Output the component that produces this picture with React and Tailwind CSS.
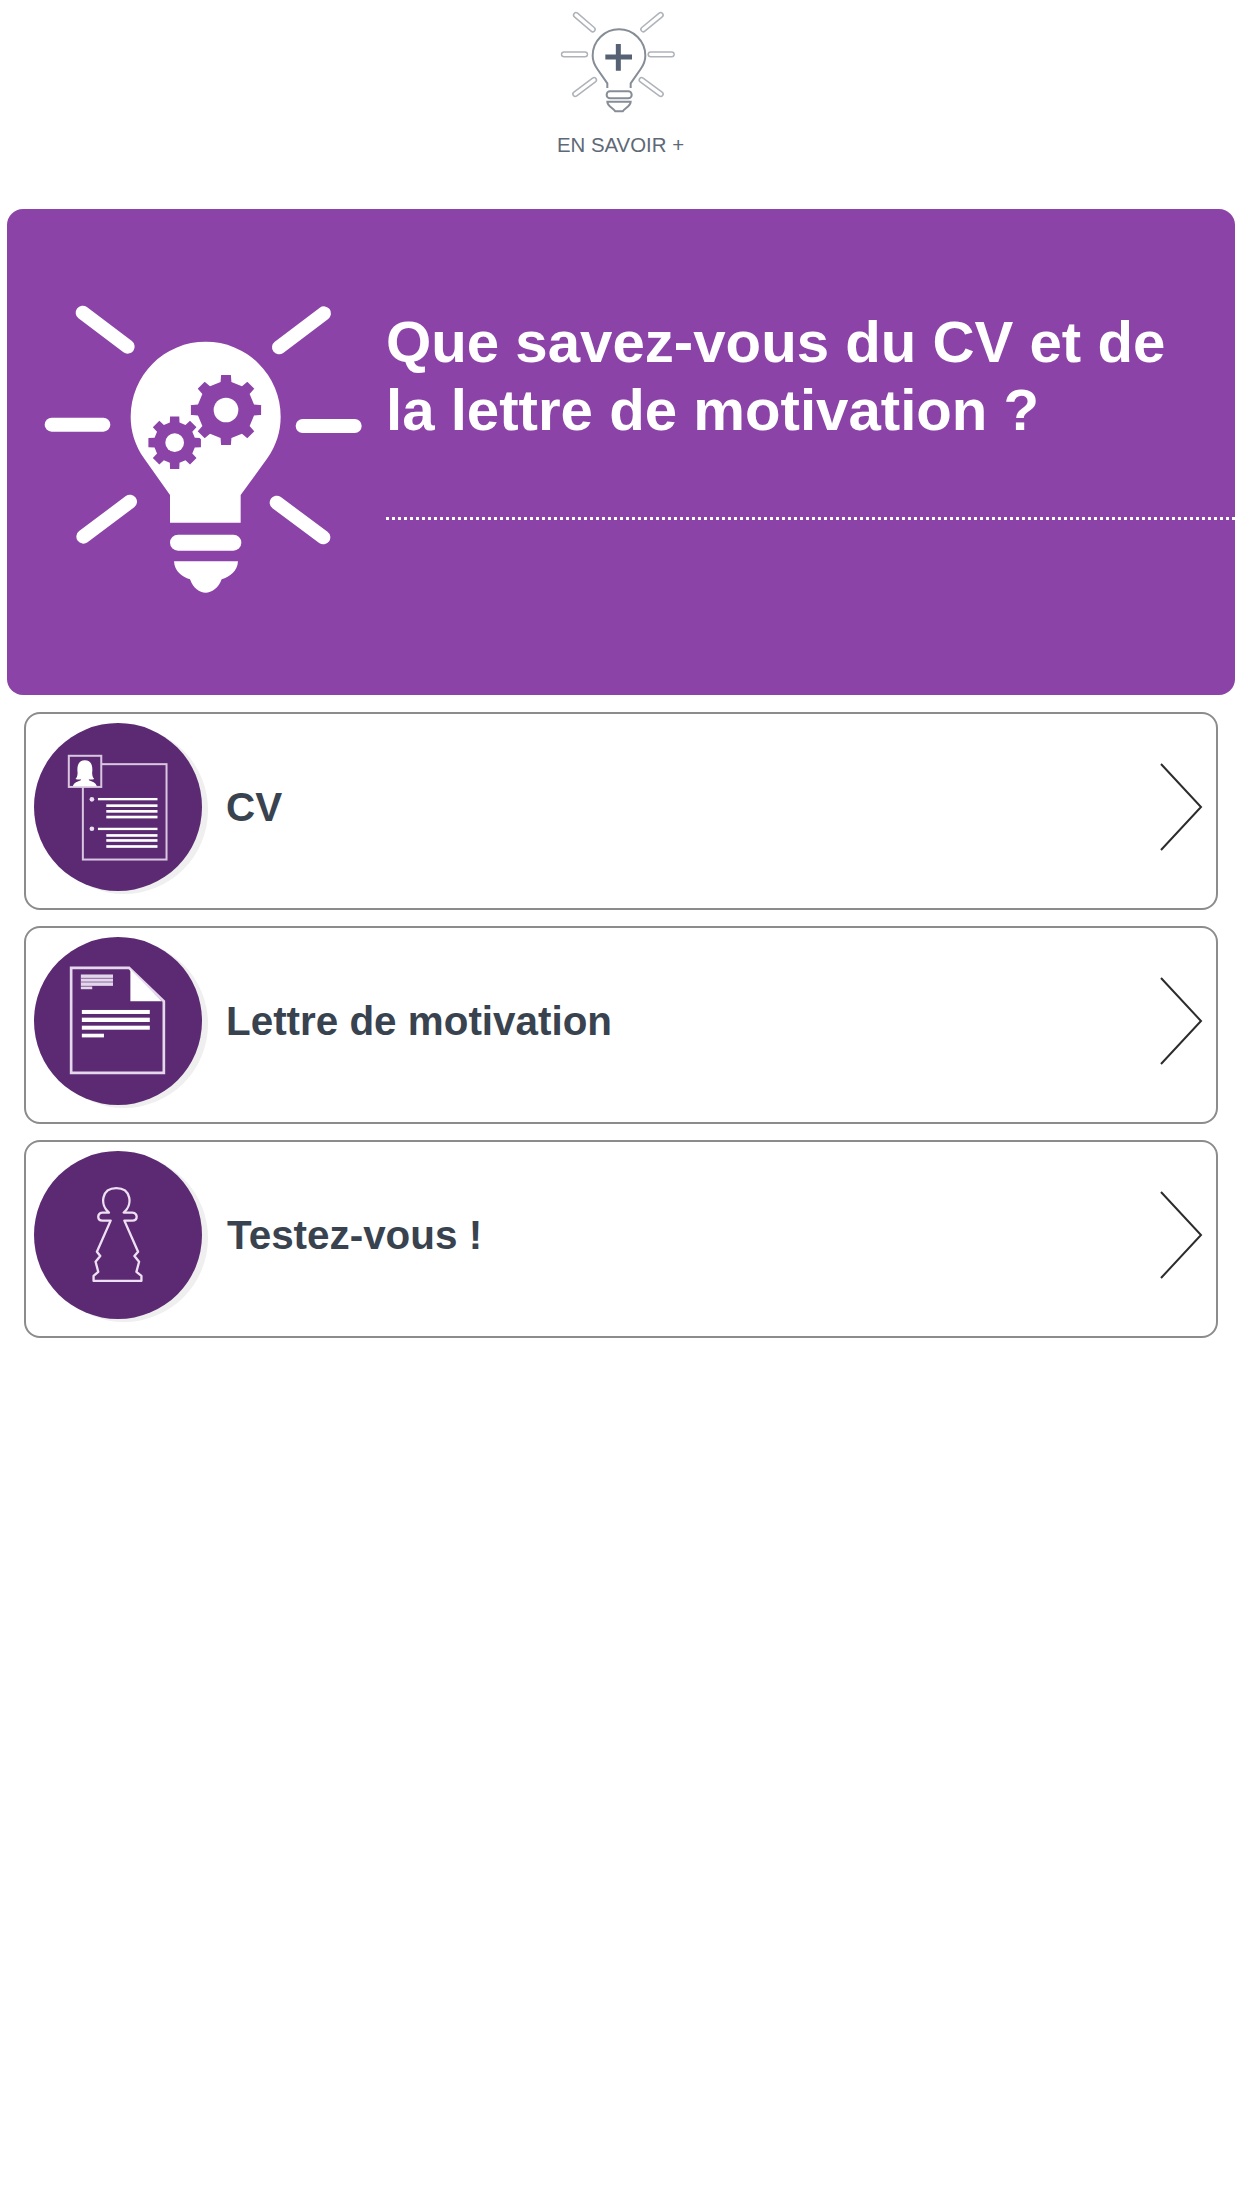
function gearPath(cx, cy, rOut, rIn, teeth) {
  const pts = [];
  const step = (Math.PI * 2) / teeth;
  for (let i = 0; i < teeth; i++) {
    const a = i * step - Math.PI / 2;
    const w = step * 0.22;
    const w2 = step * 0.3;
    [[a - w2, rIn], [a - w, rOut], [a + w, rOut], [a + w2, rIn]].forEach(([t, r]) => {
      pts.push(`${(cx + r * Math.cos(t)).toFixed(1)} ${(cy + r * Math.sin(t)).toFixed(1)}`);
    });
  }
  return "M" + pts.join("L") + "Z";
}

function TopIcon() {
  const rays = [
    [228, 45, 278, 88],
    [482, 45, 430, 88],
    [192, 163, 255, 163],
    [452, 163, 515, 163],
    [282, 240, 226, 282],
    [425, 240, 482, 282],
  ];
  return (
    <svg width="240" height="125" viewBox="0 0 720 375" fill="none" className="-ml-[2px] block">
      {rays.map((r, i) => (
        <g key={i}>
          <line x1={r[0]} y1={r[1]} x2={r[2]} y2={r[3]} stroke="#aeb3ba" strokeWidth="19" strokeLinecap="round" />
          <line x1={r[0]} y1={r[1]} x2={r[2]} y2={r[3]} stroke="#ffffff" strokeWidth="10" strokeLinecap="round" />
        </g>
      ))}
      <path
        d="M322 264 V250 L292 207 C283 194 278 182 278 167 A79 79 0 0 1 436 167 C436 182 431 194 422 207 L392 250 V264"
        stroke="#868d96"
        strokeWidth="6"
      />
      <path d="M355 132 V212 M316 171 H396" stroke="#566273" strokeWidth="15" />
      <rect x="320" y="274" width="75" height="21" rx="10" stroke="#868d96" strokeWidth="6" />
      <path d="M322 305 H392 C392 318 375 324 368 334 H346 C339 324 322 318 322 305 Z" stroke="#868d96" strokeWidth="6" />
    </svg>
  );
}

function BannerIcon() {
  const rays = [
    [248, 338, 383, 440],
    [972, 340, 837, 442],
    [155, 674, 310, 674],
    [908, 678, 1064, 678],
    [390, 905, 250, 1010],
    [830, 908, 970, 1012],
  ];
  return (
    <svg width="379" height="486" viewBox="21 27 1137 1458" className="block shrink-0" fill="none">
      {rays.map((r, i) => (
        <line key={i} x1={r[0]} y1={r[1]} x2={r[2]} y2={r[3]} stroke="#ffffff" strokeWidth="42" strokeLinecap="round" />
      ))}
      <path
        d="M510 968 V885 L432 775 C405 735 392 695 392 650 A225 225 0 0 1 842 650 C842 695 829 735 802 775 L722 885 V968 Z"
        fill="#ffffff"
      />
      <rect x="510" y="1004" width="214" height="48" rx="24" fill="#ffffff" />
      <path
        d="M522 1084 H714 C712 1115 690 1130 665 1138 C655 1165 635 1178 617 1178 C598 1178 580 1165 570 1138 C545 1130 524 1115 522 1084 Z"
        fill="#ffffff"
      />
      <path d={gearPath(524, 728, 80, 62, 8)} fill="#8c43a8" />
      <circle cx="524" cy="728" r="28" fill="#ffffff" />
      <path d={gearPath(678, 630, 112, 90, 8)} fill="#8c43a8" stroke="#ffffff" strokeWidth="10" />
      <circle cx="678" cy="630" r="37" fill="#ffffff" />
    </svg>
  );
}

function CvIcon() {
  const lines = [316, 333, 350, 405, 420, 438];
  return (
    <svg width="168" height="168" viewBox="74 69 502 502" fill="none" className="block">
      <rect x="220" y="192" width="250" height="285" stroke="#d9c6e0" strokeWidth="6" />
      <rect x="178" y="167" width="97" height="93" fill="#5b2a72" stroke="#d9c6e0" strokeWidth="6" />
      <path
        d="M226 180 C208 180 202 195 204 215 C205 225 202 232 198 236 C204 238 210 238 214 237 L214 240 C204 244 194 246 190 258 H262 C258 246 248 244 238 240 L238 237 C242 238 248 238 254 236 C250 232 247 225 248 215 C250 195 244 180 226 180 Z"
        fill="#ffffff"
      />
      <circle cx="247" cy="297" r="7" fill="#e9dfee" />
      <circle cx="247" cy="385" r="7" fill="#e9dfee" />
      <rect x="265" y="293" width="178" height="7" fill="#ffffff" />
      <rect x="265" y="382" width="178" height="7" fill="#ffffff" />
      {lines.map((y) => (
        <rect key={y} x="290" y={y - 4} width="153" height="8" fill="#ffffff" />
      ))}
    </svg>
  );
}

function LetterIcon() {
  return (
    <svg width="168" height="168" viewBox="74 66 502 502" fill="none" className="block">
      <path d="M185 158 H358 L462 258 V472 H185 Z" stroke="#e6d8ec" strokeWidth="8" />
      <path d="M362 163 V258 H456 Z" fill="#ffffff" />
      <rect x="214" y="178" width="96" height="34" fill="#e3d6ea" />
      <rect x="214" y="188" width="96" height="3" fill="#8f6ba1" />
      <rect x="214" y="199" width="96" height="3" fill="#8f6ba1" />
      <rect x="214" y="214" width="34" height="8" fill="#e3d6ea" />
      <rect x="217" y="284" width="203" height="12" fill="#ffffff" />
      <rect x="217" y="307" width="203" height="13" fill="#ffffff" />
      <rect x="217" y="331" width="203" height="12" fill="#ffffff" />
      <rect x="217" y="355" width="66" height="11" fill="#ffffff" />
    </svg>
  );
}

function PawnIcon() {
  return (
    <svg width="168" height="168" viewBox="74 64 502 502" fill="none" className="block">
      <path
        d="M298 248 C270 225 275 175 320 175 C365 175 370 225 342 248 H368 C385 250 385 272 368 272 H344 L385 365 L374 378 L388 395 L380 425 L395 437 V452 H252 V437 L266 425 L258 395 L272 378 L262 365 L303 272 H278 C262 272 262 250 278 248 Z"
        stroke="#eedff2"
        strokeWidth="7"
        strokeLinejoin="round"
      />
    </svg>
  );
}

function Row({ icon, label, textClass }) {
  return (
    <div className="flex h-[198px] items-center rounded-2xl border-2 border-[#8c8c8c] bg-white pb-2 pl-2 pr-[13px]">
      <div className="h-[168px] w-[168px] shrink-0 overflow-hidden rounded-full bg-[#5b2a72] shadow-[6px_3px_0_#efefef]">
        {icon}
      </div>
      <span className={`text-[40.4px] font-bold leading-none text-[#39434f] ${textClass}`}>{label}</span>
      <svg width="44" height="90" viewBox="0 0 44 90" fill="none" className="ml-auto block shrink-0">
        <path d="M2 2 L42 45 L2 88" stroke="#2c2c2c" strokeWidth="2" />
      </svg>
    </div>
  );
}

export default function App() {
  return (
    <div className="min-h-[2208px] bg-white font-['Liberation_Sans',Arial,sans-serif]">
      <header className="flex h-[209px] flex-col items-center">
        <TopIcon />
        <span className="mt-[8px] -ml-[1px] text-[20.4px] leading-[24px] text-[#5e6876]">EN SAVOIR +</span>
      </header>
      <section className="mx-[7px] flex h-[486px] overflow-hidden rounded-2xl bg-[#8c43a8]">
        <BannerIcon />
        <div className="flex-1">
          <h1 className="mt-[99px] text-[58.2px] font-bold leading-[68px] text-white">
            Que savez-vous du CV et de
            <br />
            la lettre de motivation ?
          </h1>
          <div className="mt-[73px] border-b-[3px] border-dotted border-white" />
        </div>
      </section>
      <div className="mx-6 mt-[17px] flex flex-col gap-4">
        <Row icon={<CvIcon />} label="CV" textClass="ml-6" />
        <Row icon={<LetterIcon />} label="Lettre de motivation" textClass="ml-6" />
        <Row icon={<PawnIcon />} label="Testez-vous !" textClass="ml-[25px]" />
      </div>
    </div>
  );
}
